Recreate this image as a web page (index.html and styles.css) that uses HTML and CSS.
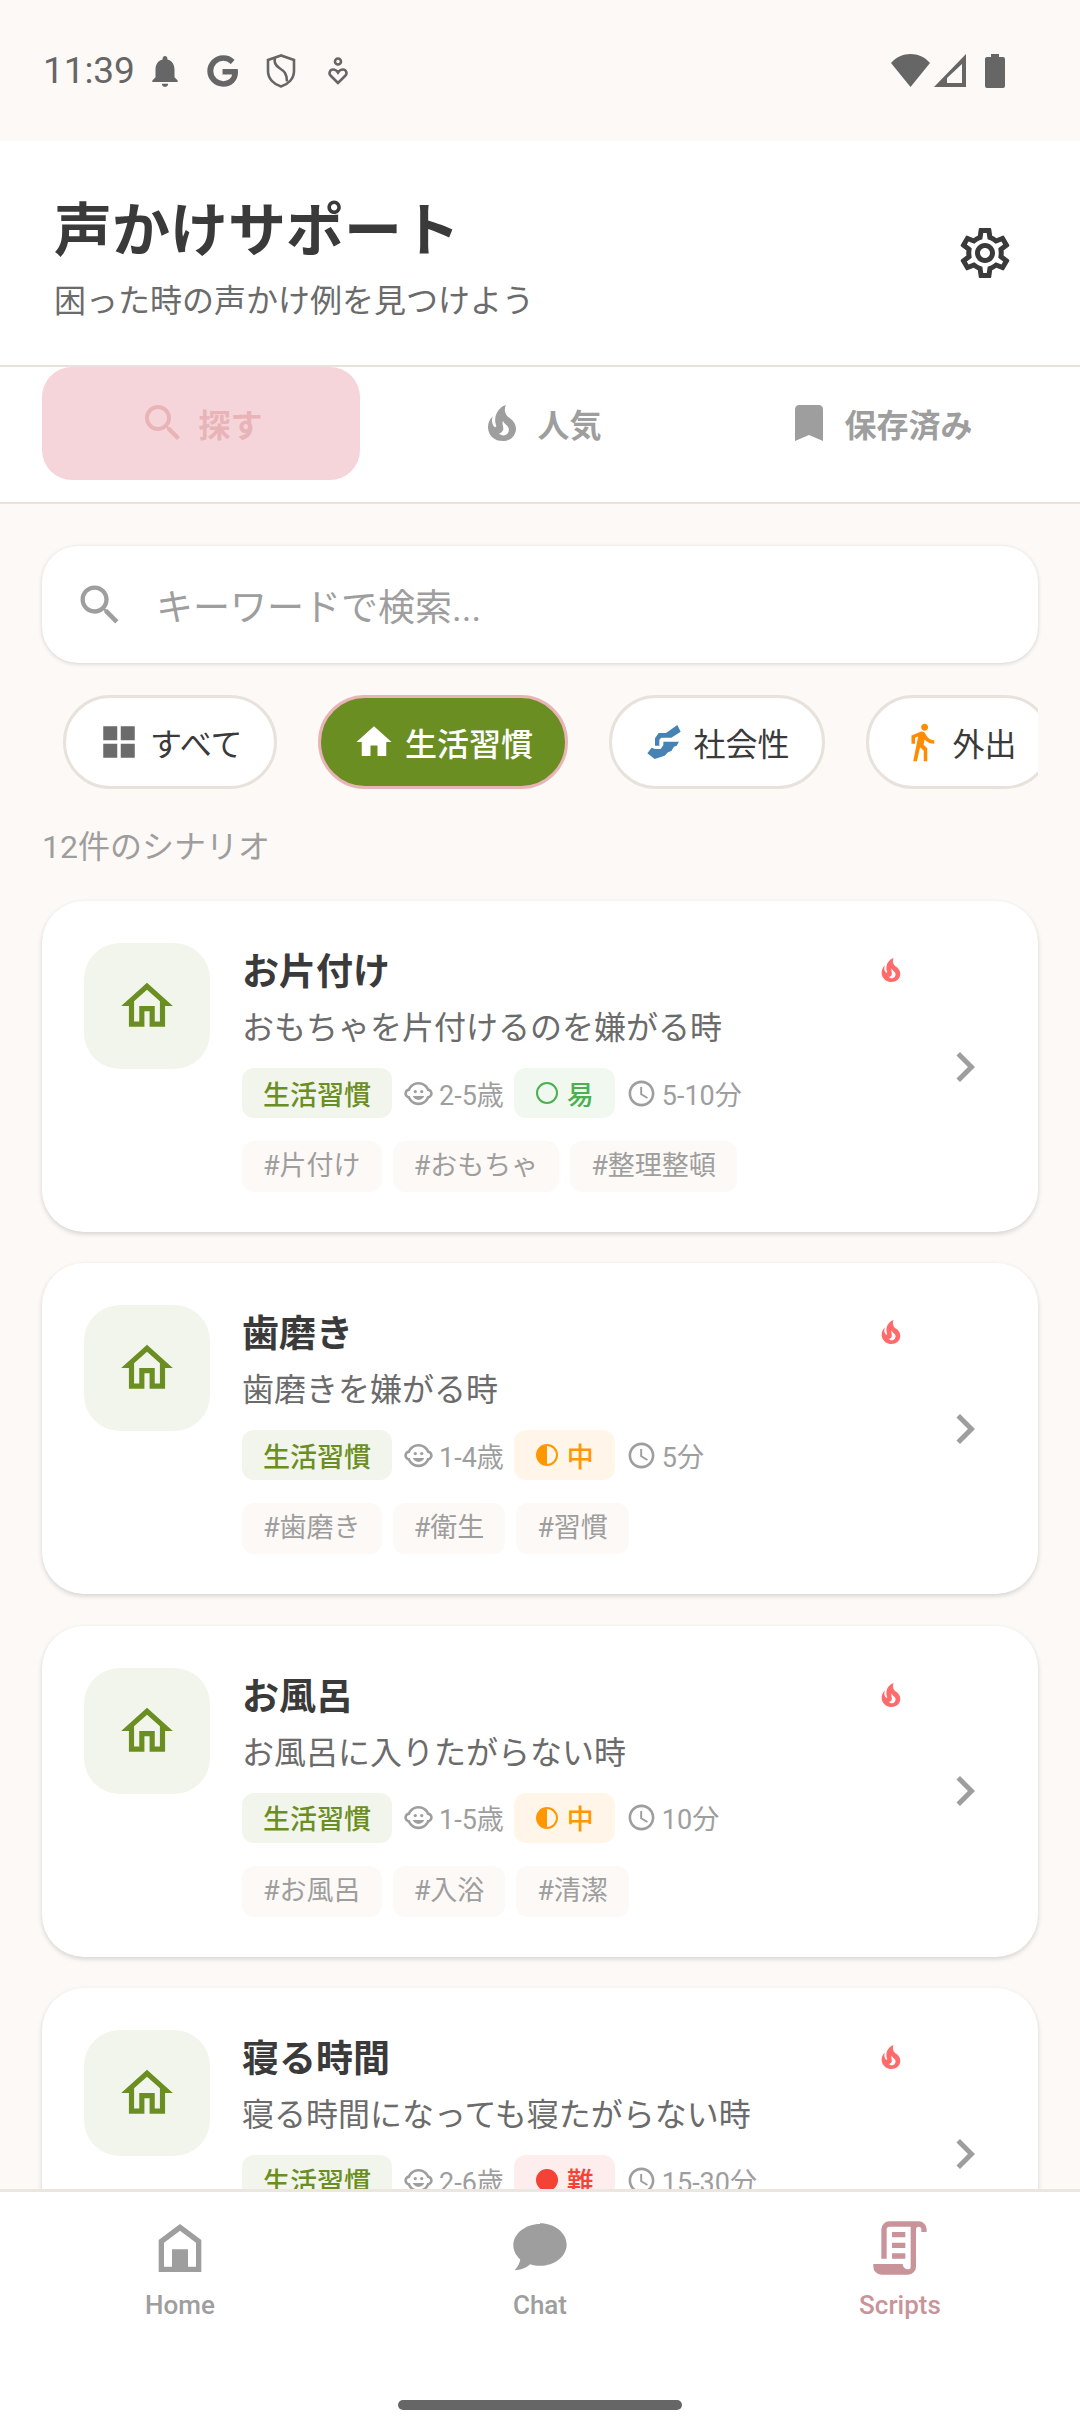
FILE: index.html
```html
<!DOCTYPE html>
<html lang="ja">
<head>
<meta charset="utf-8">
<title>声かけサポート</title>
<link rel="stylesheet" href="styles.css">
</head>
<body>
<svg class="defs" xmlns="http://www.w3.org/2000/svg">
  <symbol id="i-search" viewBox="0 0 24 24"><path d="M15.5 14h-.79l-.28-.27C15.41 12.59 16 11.11 16 9.5 16 5.91 13.09 3 9.5 3S3 5.91 3 9.5 5.91 16 9.5 16c1.61 0 3.09-.59 4.23-1.57l.27.28v.79l5 4.99L20.49 19l-4.99-5zm-6 0C7.01 14 5 11.99 5 9.5S7.01 5 9.5 5 14 7.01 14 9.5 11.99 14 9.5 14z"/></symbol>
  <symbol id="i-fire" viewBox="0 0 24 24"><path d="M17.66 11.2C17.43 10.9 17.15 10.64 16.89 10.38C16.22 9.78 15.46 9.35 14.82 8.72C13.33 7.26 13 4.85 13.95 3C13 3.23 12.17 3.75 11.46 4.32C8.87 6.4 7.85 10.07 9.07 13.22C9.11 13.32 9.15 13.42 9.15 13.55C9.15 13.77 9 13.97 8.8 14.05C8.57 14.15 8.33 14.09 8.14 13.93C8.08 13.88 8.04 13.83 8 13.76C6.87 12.33 6.69 10.28 7.45 8.64C5.78 10 4.87 12.3 5 14.47C5.06 14.97 5.12 15.47 5.29 15.97C5.43 16.57 5.7 17.17 6 17.7C7.08 19.43 8.95 20.67 10.96 20.92C13.1 21.19 15.39 20.8 17.03 19.32C18.86 17.66 19.5 15 18.56 12.72L18.43 12.46C18.28 12.13 17.66 11.2 17.66 11.2M14.5 17.5C14.22 17.74 13.76 18 13.4 18.1C12.28 18.5 11.16 17.94 10.5 17.28C11.69 17 12.4 16.12 12.61 15.23C12.78 14.43 12.46 13.77 12.33 13C12.21 12.26 12.23 11.63 12.5 10.94C12.69 11.32 12.89 11.7 13.13 12C13.9 13 15.11 13.44 15.37 14.8C15.41 14.94 15.43 15.08 15.43 15.23C15.46 16.05 15.1 16.95 14.5 17.5H14.5Z"/></symbol>
  <symbol id="i-bookmark" viewBox="0 0 24 24"><path d="M17 3H7c-1.1 0-1.99.9-1.99 2L5 21l7-3 7 3V5c0-1.1-.9-2-2-2z"/></symbol>
  <symbol id="i-gear" viewBox="0 0 24 24"><path d="M19.43 12.98c.04-.32.07-.64.07-.98 0-.34-.03-.66-.07-.98l2.11-1.65c.19-.15.24-.42.12-.64l-2-3.46c-.09-.16-.26-.25-.44-.25-.06 0-.12.01-.17.03l-2.49 1c-.52-.4-1.08-.73-1.69-.98l-.38-2.65C14.46 2.18 14.25 2 14 2h-4c-.25 0-.46.18-.49.42l-.38 2.65c-.61.25-1.17.59-1.69.98l-2.49-1c-.06-.02-.12-.03-.18-.03-.17 0-.34.09-.43.25l-2 3.46c-.13.22-.07.49.12.64l2.11 1.65c-.04.32-.07.65-.07.98 0 .33.03.66.07.98l-2.11 1.65c-.19.15-.24.42-.12.64l2 3.46c.09.16.26.25.44.25.06 0 .12-.01.17-.03l2.49-1c.52.4 1.08.73 1.69.98l.38 2.65c.03.24.24.42.49.42h4c.25 0 .46-.18.49-.42l.38-2.65c.61-.25 1.17-.59 1.69-.98l2.49 1c.06.02.12.03.18.03.17 0 .34-.09.43-.25l2-3.46c.12-.22.07-.49-.12-.64l-2.11-1.65zm-1.98-1.71c.04.31.05.52.05.73 0 .21-.02.43-.05.73l-.14 1.13.89.7 1.08.84-.7 1.21-1.27-.51-1.04-.42-.9.68c-.43.32-.84.56-1.25.73l-1.06.43-.16 1.13-.2 1.35h-1.4l-.19-1.35-.16-1.13-1.06-.43c-.43-.18-.83-.41-1.23-.71l-.91-.7-1.06.43-1.27.51-.7-1.21 1.08-.84.89-.7-.14-1.13c-.03-.31-.05-.54-.05-.74s.02-.43.05-.73l.14-1.13-.89-.7-1.08-.84.7-1.21 1.27.51 1.04.42.9-.68c.43-.32.84-.56 1.25-.73l1.06-.43.16-1.13.2-1.35h1.39l.19 1.35.16 1.13 1.06.43c.43.18.83.41 1.23.71l.91.7 1.06-.43 1.27-.51.7 1.21-1.07.85-.89.7.14 1.13zM12 8c-2.21 0-4 1.79-4 4s1.79 4 4 4 4-1.79 4-4-1.79-4-4-4zm0 6c-1.1 0-2-.9-2-2s.9-2 2-2 2 .9 2 2-.9 2-2 2z"/></symbol>
  <symbol id="i-grid" viewBox="0 0 24 24"><path d="M3 3v8h8V3H3zm10 0v8h8V3h-8zM3 13v8h8v-8H3zm10 0v8h8v-8h-8z"/></symbol>
  <symbol id="i-home" viewBox="0 0 24 24"><path d="M10 20v-6h4v6h5v-8h3L12 3 2 12h3v8z"/></symbol>
  <symbol id="i-home-o" viewBox="0 0 24 24"><path d="M12 5.69l5 4.5V18h-2v-6H9v6H7v-7.81l5-4.5M12 3L2 12h3v8h6v-6h2v6h6v-8h3L12 3z"/></symbol>
  <symbol id="i-hands" viewBox="0 0 100 102"><path d="M90 0l10 20-28 18H42l-6 6v18H23V40l11-16h22z"/><path d="M95 50l-7 12-8 3-8 13-10 4-10 10-30 10L0 85l13-17 10 4h17l8-12V50z"/></symbol>
  <symbol id="i-walk" viewBox="0 0 24 24"><path d="M13.5 5.5c1.1 0 2-.9 2-2s-.9-2-2-2-2 .9-2 2 .9 2 2 2zM9.8 8.9L7 23h2.1l1.8-8 2.1 2v6h2v-7.5l-2.1-2 .6-3C14.8 12 16.8 13 19 13v-2c-1.9 0-3.5-1-4.3-2.4l-1-1.6c-.4-.6-1-1-1.7-1-.3 0-.5.1-.8.1L6 8.3V13h2V9.6l1.8-.7"/></symbol>
  <symbol id="i-face" viewBox="0 0 24 24"><circle cx="14.5" cy="10.5" r="1.25"/><circle cx="9.5" cy="10.5" r="1.25"/><path d="M12 17c2.01 0 3.74-1.23 4.5-3h-9c.76 1.77 2.49 3 4.5 3z"/><path d="M22.94 12.66c.04-.21.06-.43.06-.66s-.02-.45-.06-.66c-.25-1.51-1.36-2.74-2.81-3.17-.53-1.12-1.28-2.1-2.19-2.91C16.36 3.85 14.28 3 12 3s-4.36.85-5.94 2.26c-.92.81-1.67 1.8-2.19 2.91-1.45.43-2.56 1.65-2.81 3.17-.04.21-.06.43-.06.66s.02.45.06.66c.25 1.51 1.36 2.74 2.81 3.17.52 1.11 1.27 2.09 2.17 2.89C7.62 20.14 9.71 21 12 21s4.38-.86 5.97-2.28c.9-.8 1.65-1.79 2.17-2.89 1.44-.43 2.55-1.65 2.8-3.17zM19 14c-.1 0-.19-.02-.29-.03-.2.67-.49 1.29-.86 1.86C16.6 17.74 14.45 19 12 19s-4.6-1.26-5.85-3.17c-.37-.57-.66-1.19-.86-1.86-.1.01-.19.03-.29.03-1.1 0-2-.9-2-2s.9-2 2-2c.1 0 .19.02.29.03.2-.67.49-1.29.86-1.86C7.4 6.26 9.55 5 12 5s4.6 1.26 5.85 3.17c.37.57.66 1.19.86 1.86.1-.01.19-.03.29-.03 1.1 0 2 .9 2 2s-.9 2-2 2z"/></symbol>
  <symbol id="i-clock" viewBox="0 0 24 24"><path d="M11.99 2C6.47 2 2 6.48 2 12s4.47 10 9.99 10C17.52 22 22 17.52 22 12S17.52 2 11.99 2zM12 20c-4.42 0-8-3.58-8-8s3.58-8 8-8 8 3.58 8 8-3.58 8-8 8zm.5-13H11v6l5.25 3.15.75-1.23-4.5-2.67z"/></symbol>
  <symbol id="i-chev" viewBox="0 0 24 24"><path d="M10 6L8.59 7.41 13.17 12l-4.58 4.59L10 18l6-6z"/></symbol>
  <symbol id="i-easy" viewBox="0 0 24 24"><path fill-rule="evenodd" d="M12 1a11 11 0 1 0 0 22 11 11 0 0 0 0-22zm0 2a9 9 0 1 1 0 18 9 9 0 0 1 0-18z"/></symbol>
  <symbol id="i-mid" viewBox="0 0 24 24"><path fill-rule="evenodd" d="M12 1a11 11 0 1 0 0 22 11 11 0 0 0 0-22zm0 2a9 9 0 1 1 0 18z"/></symbol>
  <symbol id="i-hard" viewBox="0 0 24 24"><circle cx="12" cy="12" r="11"/></symbol>
  <symbol id="i-nav-home" viewBox="0 0 24 24"><path fill-rule="evenodd" d="M12 3 4 9v12h16V9zm6 16h-.2H6v-9l6-4.500 6 4.500zM9 12.500h6V19H9z"/></symbol>
  <symbol id="i-nav-chat" viewBox="0 0 24 24"><path d="M12 3C6.500 3 2 6.600 2 11c0 2 1 3.900 2.600 5.300-.2 1.600-1.200 3-2.100 4 2.200 0 4.300-.9 5.800-2.200 1.200.4 2.400.6 3.700.6 5.500 0 10-3.600 10-8s-4.500-8-10-8z"/></symbol>
  <symbol id="i-nav-script" viewBox="0 0 24 24"><path d="M15,20A1,1 0 0,0 16,19V4H8A1,1 0 0,0 7,5V16H5V5A3,3 0 0,1 8,2H19A3,3 0 0,1 22,5V6H20V5A1,1 0 0,0 19,4A1,1 0 0,0 18,5V9L18,19A3,3 0 0,1 15,22H5A3,3 0 0,1 2,19V18H13A2,2 0 0,0 15,20M9,6H14V8H9V6M9,10H14V12H9V10M9,14H14V16H9V14Z"/></symbol>
</svg>

<div class="app">
  <div class="statusbar">
    <span class="time">11:39</span>
    <svg class="st st-bell" viewBox="0 0 24 24"><path d="M12 22c1.100 0 2-.9 2-2h-4c0 1.100.9 2 2 2zm6-6v-5c0-3.070-1.630-5.640-4.500-6.320V4c0-.83-.67-1.500-1.500-1.500s-1.500.67-1.500 1.500v.68C7.640 5.360 6 7.920 6 11v5l-2 2v1h16v-1l-2-2z"/></svg>
    <svg class="st st-g" viewBox="0 0 24 24"><path class="g-stroke" d="M21.350 11.100h-9.170v2.730h6.510c-.33 3.810-3.500 5.440-6.500 5.440C8.360 19.270 5 16.250 5 12c0-4.100 3.200-7.270 7.200-7.270 3.090 0 4.900 1.970 4.900 1.970L19 4.720S16.560 2 12.100 2C6.420 2 2.030 6.800 2.030 12c0 5.050 4.130 10 10.220 10 5.350 0 9.250-3.670 9.250-9.090 0-1.150-.15-1.810-.15-1.810z"/></svg>
    <svg class="st st-shield" viewBox="0 0 30 34"><path class="line" d="M15 1.500 2 6v11c0 7.500 5.600 13.300 13 15.500C22.400 30.300 28 24.500 28 17V6z"/><path class="line" d="M9 4c-1.500 5 1 8 5 10.500s7 5 7 13"/></svg>
    <svg class="st st-care" viewBox="0 0 20 28"><circle class="line" cx="10" cy="4.500" r="3"/><path class="line" d="M10 26 2.500 18.500c-2-2.200-.6-6 2.500-6 2.200 0 3.800 1 5 3 1.200-2 2.800-3 5-3 3.100 0 4.500 3.800 2.500 6z"/></svg>
    <span class="st-spacer"></span>
    <svg class="st st-wifi" viewBox="0 0 39 33"><path d="M0 9C10-3 29-3 39 9L19.500 33z"/></svg>
    <svg class="st st-signal" viewBox="0 0 32 33"><path fill-rule="evenodd" d="M32 0v33H0zM28 10 13 24v5h15z"/></svg>
    <svg class="st st-batt" viewBox="0 0 20 34"><path d="M6 0h8v3h4a2 2 0 0 1 2 2v27a2 2 0 0 1-2 2H2a2 2 0 0 1-2-2V5a2 2 0 0 1 2-2h4z"/></svg>
  </div>

  <header class="header">
    <div class="header-text">
      <h1 class="app-title">声かけサポート</h1>
      <p class="app-sub">困った時の声かけ例を見つけよう</p>
    </div>
    <svg class="gear"><use href="#i-gear"/></svg>
  </header>

  <nav class="tabs">
    <div class="tab tab-active"><svg class="tab-ic"><use href="#i-search"/></svg><span>探す</span></div>
    <div class="tab"><svg class="tab-ic"><use href="#i-fire"/></svg><span>人気</span></div>
    <div class="tab"><svg class="tab-ic"><use href="#i-bookmark"/></svg><span>保存済み</span></div>
  </nav>

  <main class="scroll">
    <div class="search">
      <svg class="search-ic"><use href="#i-search"/></svg>
      <span class="search-ph">キーワードで検索...</span>
    </div>

    <div class="filters">
      <div class="filter"><svg class="filter-ic c-grey"><use href="#i-grid"/></svg><span>すべて</span></div>
      <div class="filter filter-on"><svg class="filter-ic"><use href="#i-home"/></svg><span>生活習慣</span></div>
      <div class="filter"><svg class="filter-ic c-blue filter-hands"><use href="#i-hands"/></svg><span>社会性</span></div>
      <div class="filter"><svg class="filter-ic c-orange"><use href="#i-walk"/></svg><span>外出</span></div>
    </div>

    <p class="count">12件のシナリオ</p>

    <div class="cards">
      <article class="card">
        <div class="card-icon"><svg><use href="#i-home-o"/></svg></div>
        <div class="card-main">
          <div class="card-head"><h2 class="card-title">お片付け</h2><svg class="card-fire"><use href="#i-fire"/></svg></div>
          <p class="card-sub">おもちゃを片付けるのを嫌がる時</p>
          <div class="meta">
            <span class="pill pill-cat">生活習慣</span>
            <span class="info"><svg class="info-ic"><use href="#i-face"/></svg>2-5歳</span>
            <span class="pill pill-easy"><svg class="lvl-ic"><use href="#i-easy"/></svg>易</span>
            <span class="info"><svg class="info-ic"><use href="#i-clock"/></svg>5-10分</span>
          </div>
          <div class="tags"><span class="tag">#片付け</span><span class="tag">#おもちゃ</span><span class="tag">#整理整頓</span></div>
        </div>
        <svg class="chev"><use href="#i-chev"/></svg>
      </article>

      <article class="card">
        <div class="card-icon"><svg><use href="#i-home-o"/></svg></div>
        <div class="card-main">
          <div class="card-head"><h2 class="card-title">歯磨き</h2><svg class="card-fire"><use href="#i-fire"/></svg></div>
          <p class="card-sub">歯磨きを嫌がる時</p>
          <div class="meta">
            <span class="pill pill-cat">生活習慣</span>
            <span class="info"><svg class="info-ic"><use href="#i-face"/></svg>1-4歳</span>
            <span class="pill pill-mid"><svg class="lvl-ic"><use href="#i-mid"/></svg>中</span>
            <span class="info"><svg class="info-ic"><use href="#i-clock"/></svg>5分</span>
          </div>
          <div class="tags"><span class="tag">#歯磨き</span><span class="tag">#衛生</span><span class="tag">#習慣</span></div>
        </div>
        <svg class="chev"><use href="#i-chev"/></svg>
      </article>

      <article class="card">
        <div class="card-icon"><svg><use href="#i-home-o"/></svg></div>
        <div class="card-main">
          <div class="card-head"><h2 class="card-title">お風呂</h2><svg class="card-fire"><use href="#i-fire"/></svg></div>
          <p class="card-sub">お風呂に入りたがらない時</p>
          <div class="meta">
            <span class="pill pill-cat">生活習慣</span>
            <span class="info"><svg class="info-ic"><use href="#i-face"/></svg>1-5歳</span>
            <span class="pill pill-mid"><svg class="lvl-ic"><use href="#i-mid"/></svg>中</span>
            <span class="info"><svg class="info-ic"><use href="#i-clock"/></svg>10分</span>
          </div>
          <div class="tags"><span class="tag">#お風呂</span><span class="tag">#入浴</span><span class="tag">#清潔</span></div>
        </div>
        <svg class="chev"><use href="#i-chev"/></svg>
      </article>

      <article class="card">
        <div class="card-icon"><svg><use href="#i-home-o"/></svg></div>
        <div class="card-main">
          <div class="card-head"><h2 class="card-title">寝る時間</h2><svg class="card-fire"><use href="#i-fire"/></svg></div>
          <p class="card-sub">寝る時間になっても寝たがらない時</p>
          <div class="meta">
            <span class="pill pill-cat">生活習慣</span>
            <span class="info"><svg class="info-ic"><use href="#i-face"/></svg>2-6歳</span>
            <span class="pill pill-hard"><svg class="lvl-ic"><use href="#i-hard"/></svg>難</span>
            <span class="info"><svg class="info-ic"><use href="#i-clock"/></svg>15-30分</span>
          </div>
        </div>
        <svg class="chev"><use href="#i-chev"/></svg>
      </article>
    </div>
  </main>

  <footer class="bottom">
    <div class="bottom-items">
      <div class="nav-item"><svg class="nav-ic"><use href="#i-nav-home"/></svg><span>Home</span></div>
      <div class="nav-item"><svg class="nav-ic"><use href="#i-nav-chat"/></svg><span>Chat</span></div>
      <div class="nav-item nav-on"><svg class="nav-ic"><use href="#i-nav-script"/></svg><span>Scripts</span></div>
    </div>
    <div class="home-bar"></div>
  </footer>
</div>
</body>
</html>
```

FILE: styles.css
```css
* { box-sizing: border-box; }
html, body { margin: 0; padding: 0; }
body {
  width: 1080px;
  height: 2424px;
  overflow: hidden;
  background: #fdf9f6;
  font-family: "Roboto", "Noto Sans CJK JP", sans-serif;
  color: #3a3a3a;
}
h1, h2, p { margin: 0; font: inherit; }
svg { display: block; flex: none; fill: currentColor; }
.defs { display: none; }

.app { height: 2424px; display: flex; flex-direction: column; }

/* status bar */
.statusbar {
  height: 141px;
  flex: none;
  display: flex;
  align-items: center;
  padding: 0 75px 0 43px;
  color: #666;
  background: #fdf9f6;
}
.time { font-size: 37px; line-height: 42px; width: 107px; letter-spacing: -.1px; }
.st-bell { width: 38px; height: 38px; margin-left: -4px; }
.st-g { width: 36px; height: 36px; margin-left: 21px; }
.g-stroke { stroke: currentColor; stroke-width: 1; }
.st-shield { width: 30px; height: 34px; margin-left: 25px; }
.st-care { width: 20px; height: 28px; margin-left: 32px; }
.line { fill: none; stroke: currentColor; stroke-width: 2.6; }
.st-spacer { flex: 1; }
.st-wifi { width: 39px; height: 33px; }
.st-signal { width: 32px; height: 33px; margin-left: 4px; }
.st-batt { width: 20px; height: 34px; margin-left: 19px; }

/* header */
.header {
  height: 224px;
  flex: none;
  background: #fff;
  display: flex;
  align-items: center;
  justify-content: space-between;
  padding: 0 65px 0 54px;
}
.header-text { margin-top: 12px; }
.app-title { font-size: 58px; line-height: 72px; font-weight: 700; color: #3a3a3a; }
.app-sub { font-size: 32px; line-height: 44px; color: #6b6b6b; margin-top: 12px; }
.gear { width: 60px; height: 60px; color: #3a3a3a; }

/* tabs */
.tabs {
  height: 139px;
  flex: none;
  background: #fff;
  border-top: 2px solid #e8e2dd;
  border-bottom: 2px solid #e8e2dd;
  padding: 0 42px 22px;
  display: flex;
  gap: 21px;
}
.tab {
  flex: 1;
  border-radius: 30px;
  display: flex;
  align-items: center;
  justify-content: center;
  gap: 11px;
  padding-bottom: 2px;
  font-size: 32px;
  font-weight: 600;
  color: #9e9e9e;
}
.tab-ic { width: 48px; height: 48px; }
.tab-active { background: #f5d5d9; color: #e8b4b8; }

/* scroll */
.scroll { flex: 1; min-height: 0; overflow: hidden; padding: 42px 42px 0; }
.search {
  height: 117px;
  background: #fff;
  border-radius: 36px;
  box-shadow: 0 1px 4px rgba(0, 0, 0, .16);
  display: flex;
  align-items: center;
  padding-left: 32px;
  gap: 30px;
}
.search-ic { width: 52px; height: 52px; color: #9e9e9e; }
.search-ph { font-size: 37px; color: #9e9e9e; }

.filters {
  margin-top: 32px;
  display: flex;
  gap: 41px;
  padding-left: 21px;
  overflow: hidden;
}
.filter {
  flex: none;
  height: 94px;
  border: 3px solid #e8e2dd;
  border-radius: 47px;
  background: #fff;
  display: flex;
  align-items: center;
  gap: 10px;
  padding: 0 32px;
  font-size: 32px;
  color: #3a3a3a;
}
.filter-ic { width: 42px; height: 42px; }
.filter-hands { width: 34px; height: 34px; margin: 0 3px; }
.filter-on { background: #6b8e23; border-color: #e8b4b8; color: #fff; font-weight: 500; padding: 0 31.5px; }
.c-grey { color: #6b6b6b; }
.c-blue { color: #4682b4; }
.c-orange { color: #ff8c00; }

.count { margin-top: 34px; font-size: 32px; line-height: 48px; color: #9e9e9e; }

/* cards */
.cards { margin-top: 30px; display: flex; flex-direction: column; gap: 31.4px; }
.card {
  flex: none;
  height: 331px;
  background: #fff;
  border-radius: 42px;
  box-shadow: 0 2px 5px rgba(0, 0, 0, .16);
  display: flex;
  padding: 42px 43px 40px 42px;
}
.card-icon {
  width: 126px;
  height: 126px;
  flex: none;
  border-radius: 36px;
  background: #f2f5ec;
  color: #6b8e23;
  display: flex;
  align-items: center;
  justify-content: center;
}
.card-icon svg { width: 62px; height: 62px; }
.card-main { flex: 1; min-width: 0; margin-left: 32px; }
.card-head { display: flex; align-items: center; justify-content: space-between; height: 58px; padding-right: 27px; margin-top: 1px; margin-bottom: -1px; }
.card-title { font-size: 37px; line-height: 58px; font-weight: 600; color: #3a3a3a; }
.card-fire { width: 32px; height: 32px; color: #ff6b6b; margin-top: -6px; margin-right: 1px; }
.card-sub { font-size: 32px; line-height: 54px; color: #6b6b6b; }
.meta { display: flex; align-items: center; margin-top: 13px; height: 50px; }
.pill {
  height: 50px;
  padding: 0 21px;
  border-radius: 12px;
  font-size: 27px;
  font-weight: 500;
  display: flex;
  align-items: center;
  gap: 8px;
}
.pill-cat { background: #f2f5ec; color: #6b8e23; margin-right: 11px; }
.pill-easy, .pill-mid, .pill-hard { margin: 0 11px 0 10px; }
.pill-easy { background: #f0f8f0; color: #4caf50; }
.pill-mid { background: #fff6e9; color: #ff9800; }
.pill-hard { background: #fdeeed; color: #f44336; }
.lvl-ic { width: 24px; height: 24px; }
.info { display: flex; align-items: center; gap: 5px; font-size: 27px; color: #9e9e9e; }
.info-ic { width: 31px; height: 31px; }
.tags { display: flex; gap: 11px; margin-top: 23px; }
.tag {
  height: 51px;
  padding: 0 21px;
  border-radius: 12px;
  background: #fdf9f6;
  color: #9e9e9e;
  font-size: 27px;
  line-height: 51px;
}
.chev { width: 60px; height: 60px; align-self: center; margin-top: -2px; color: #9e9e9e; }

/* bottom nav */
.bottom {
  height: 235px;
  flex: none;
  background: #fff;
  border-top: 3px solid #ece6e1;
  display: flex;
  flex-direction: column;
  align-items: center;
}
.bottom-items { width: 100%; display: grid; grid-template-columns: repeat(3, 1fr); padding-top: 24px; }
.nav-item {
  display: flex;
  flex-direction: column;
  align-items: center;
  color: #9e9e9e;
  font-size: 26px;
  font-weight: 500;
  line-height: 34px;
  gap: 8px;
}
.nav-ic { width: 64px; height: 64px; }
.nav-on { color: #c9939a; }
.home-bar { width: 284px; height: 10px; border-radius: 5px; background: #666; margin-top: 78px; }
```
